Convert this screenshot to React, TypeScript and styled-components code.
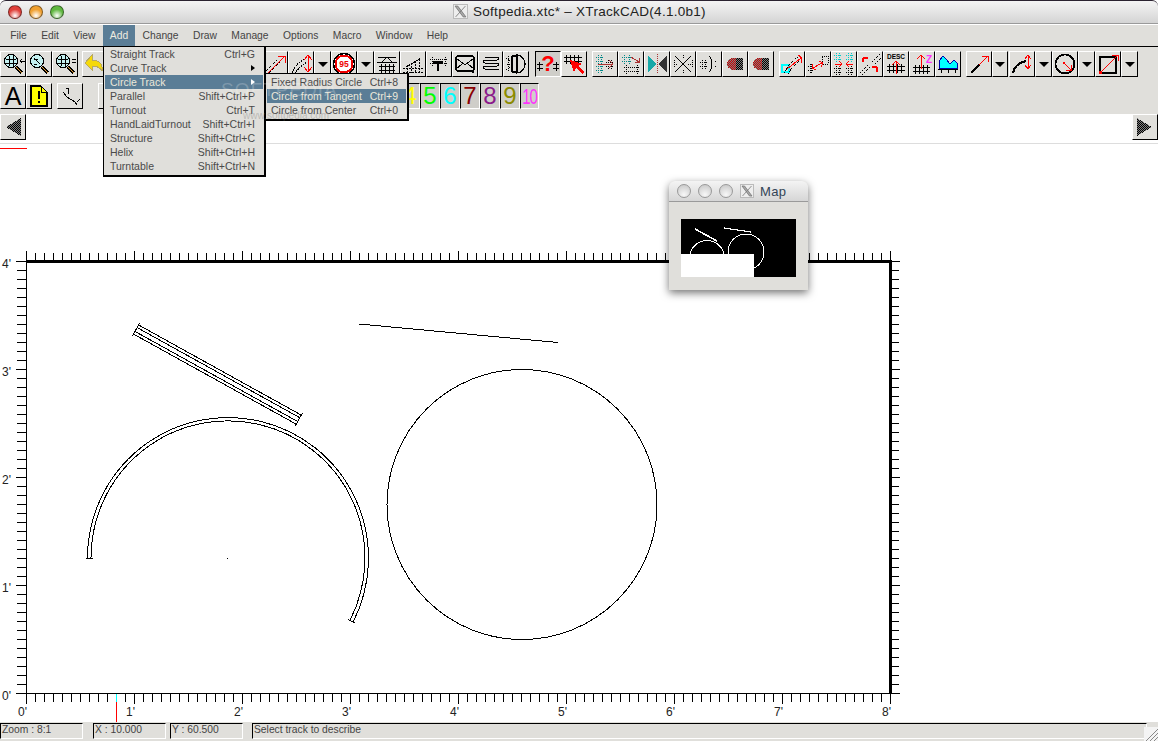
import React, { ReactNode } from "react";
import styled, { createGlobalStyle } from "styled-components";

const GREY = "#e0dfdb";
const HILITE = "#5a7d96";

const GlobalStyle = createGlobalStyle`
    html, body {
        margin: 0;
        padding: 0;
        background: white;
        overflow: hidden;
    }
    body {
        font-family: "Liberation Sans", Arial, sans-serif;
    }
`;

// small icon drawings, all on a 24x24 grid
const Rails = ({ x = 4, y = 10, w = 16, c = "#000" }: { x?: number, y?: number, w?: number, c?: string }) => {
    const ties = [];
    for (let i = x + 2; i < x + w; i += 4) ties.push(i);
    return (
        <g stroke={c}>
            <line x1={x} y1={y + 2.5} x2={x + w} y2={y + 2.5} />
            <line x1={x} y1={y + 6.5} x2={x + w} y2={y + 6.5} />
            {ties.map((t) => <line key={t} x1={t + 0.5} y1={y} x2={t + 0.5} y2={y + 9} />)}
        </g>
    );
};

const DotRails = ({ x = 4, y = 8, w = 12, c = "#000" }: { x?: number, y?: number, w?: number, c?: string }) => (
    <g stroke={c} strokeDasharray="1 1">
        <line x1={x} y1={y + 2.5} x2={x + w} y2={y + 2.5} />
        <line x1={x} y1={y + 6.5} x2={x + w} y2={y + 6.5} />
        <line x1={x + 2.5} y1={y} x2={x + 2.5} y2={y + 9} />
        <line x1={x + w - 2.5} y1={y} x2={x + w - 2.5} y2={y + 9} />
    </g>
);

const Arrow = ({ d, tip, c = "#f00" }: { d: string, tip: string, c?: string }) => (
    <g fill="none" stroke={c} strokeWidth="1">
        <path d={d} />
        <path d={tip} />
    </g>
);

const Mag = ({ children }: { children?: ReactNode }) => (
    <>
        <line x1="15" y1="15" x2="21" y2="21" stroke="#000" strokeWidth="3" />
        <line x1="15.5" y1="15.5" x2="21" y2="21" stroke="#e8a13a" strokeWidth="1.4" />
        <circle cx="10" cy="9" r="6.5" fill="#c4f0f0" stroke="#000" strokeWidth="1.3" />
        {children}
    </>
);

const Diag = ({ c = "#000" }: { c?: string }) => (
    <g stroke={c} strokeWidth="1" strokeDasharray="1 1" fill="none">
        <line x1="3" y1="19" x2="14" y2="8" />
        <line x1="6" y1="21" x2="17" y2="10" />
    </g>
);

const Dither = ({ id, c = "#000" }: { id: string, c?: string }) => (
    <pattern id={id} width="2" height="2" patternUnits="userSpaceOnUse">
        <rect width="2" height="2" fill="#808080" />
        <rect width="1" height="1" fill={c} />
        <rect x="1" y="1" width="1" height="1" fill={c} />
    </pattern>
);

const Blob = ({ id }: { id: string }) => (
    <>
        <defs>
            <Dither id={id} />
            <Dither id={id + "r"} c="#c00" />
        </defs>
        <path d="M4 12a7 6 0 0 1 7-6h9v12h-9a7 6 0 0 1-7-6z" fill={`url(#${id})`} />
        <path d="M4 12a7 6 0 0 1 7-6h2v12h-2a7 6 0 0 1-7-6z" fill={`url(#${id}r)`} />
    </>
);

const ICONS: { [key: string]: ReactNode } = {
    zoomIn: <Mag><path d="M5 7h10M5 11h10M8 4v10M12 4v10" stroke="#000" /><path d="M24 9h-5M21 7l-2 2 2 2" stroke="#000" fill="none" /></Mag>,
    zoomSet: <Mag><path d="M7 6l6 6M7 12h3M7 7h4" stroke="#000" fill="none" /></Mag>,
    zoomOut: <Mag><path d="M5 7h10M5 11h10M8 4v10M12 4v10" stroke="#000" /><path d="M19 7h4M19 10h4" stroke="#000" /></Mag>,
    undo: <path d="M9 3L2 11l7 7v-4c5 0 8 1 10 5 1-7-3-11-10-11z" fill="#f5d90a" stroke="#b8a860" />,
    redo: <path d="M15 3l7 8-7 7v-4c-5 0-8 1-10 5-1-7 3-11 10-11z" fill="#ddd" stroke="#aaa" />,
    straightArrow: (
        <>
            <Diag />
            <Arrow d="M4 22L21 5" tip="M15 4h7v7" />
        </>
    ),
    curveArrow: (
        <>
            <path d="M3 21C6 14 10 10 16 7M6 22C9 16 13 13 18 10" stroke="#000" strokeWidth="1.2" strokeDasharray="1.5 1" fill="none" />
            <Arrow d="M19 4v15" tip="M15 8l4-5 4 5M15 15l4 5 4-5" />
        </>
    ),
    speed: (
        <>
            <circle cx="12" cy="12" r="10.5" fill="#fff" stroke="#000" strokeWidth="1.5" />
            <circle cx="12" cy="12" r="8.5" fill="#fff" stroke="#e00" strokeWidth="2" />
            <SvgLabel x={12} y={15} size={8.5} color="#e00" bold>95</SvgLabel>
        </>
    ),
    bridge: (
        <>
            <path d="M3 5.5h18M6 11l6-6 6 6M2 10.5h20" stroke="#000" fill="none" />
            <Rails x={4} y={12} w={16} />
        </>
    ),
    ramp: (
        <path d="M2 17L20 6M2 20h20M6 13v8M10 11v10M14 9v12M18 7v14M2 16h20" stroke="#000" strokeDasharray="2 1" fill="none" />
    ),
    tee: (
        <>
            <path d="M6 9h10v3H6zM10 12h2v7h-2z" fill="#000" />
            <DotRails x={3} y={5} w={18} />
        </>
    ),
    tray: (
        <>
            <rect x="3" y="4" width="18" height="15" rx="2" fill="none" stroke="#000" strokeWidth="1.4" />
            <path d="M3 6l9 7 9-7M3 17l6-5M21 17l-6-5" stroke="#000" fill="none" />
            <rect x="19" y="19" width="2" height="2" fill="#000" />
        </>
    ),
    coil: <path d="M6 5h13c2 2 0 3-1 3H6c-2 0-2 3 0 3h12c2 0 2 3 0 3H6c-2 0-2 3 0 3h14" stroke="#000" fill="none" />,
    table: (
        <>
            <path d="M13 3a8 9 0 0 1 0 18zM8 4h5M8 20h5M8 4v16" stroke="#000" fill="none" strokeWidth="1.2" />
            <path d="M2 6l5 3M2 18l5-3M3 12h4M4 4v16" stroke="#000" strokeDasharray="1 1" fill="none" />
        </>
    ),
    help: (
        <>
            <path d="M1 12.5h6M1 16.5h6M17 12.5h6M17 16.5h6M3.5 10v9M20.5 10v9" stroke="#000" fill="none" />
            <SvgLabel x={12} y={19} size={22} color="#f00" bold>?</SvgLabel>
        </>
    ),
    pick: (
        <>
            <Rails x={2} y={3} w={18} />
            <path d="M8 8l12 4-4 2 6 6-2 2-6-6-2 4z" fill="#f00" />
        </>
    ),
    splitTeal: (
        <>
            <DotRails x={3} y={3} w={8} c="#088" />
            <DotRails x={3} y={12} w={8} c="#088" />
            <DotRails x={13} y={8} w={8} />
            <Arrow d="M5 12h15" tip="M16 8l4 4-4 4" c="#a33" />
        </>
    ),
    splitRamp: (
        <>
            <DotRails x={3} y={3} w={10} c="#088" />
            <DotRails x={5} y={13} w={16} />
            <Arrow d="M12 5l8 5" tip="M16 10h4v-4" c="#a33" />
        </>
    ),
    bow: (
        <>
            <path d="M3 4v16L12 12zM13 12l9-8v16z" fill="#333" />
            <path d="M3 4v16L12 12z" fill="#18a8a8" />
            <path d="M12 2v20" stroke="#a33" strokeDasharray="1 1" />
        </>
    ),
    cross: (
        <>
            <path d="M4 4l16 16M4 20L20 4" stroke="#000" fill="none" />
            <path d="M3 12h4M17 12h4M3 8v8M21 8v8M12 3v3M12 18v3" stroke="#000" strokeDasharray="1 1" fill="none" />
        </>
    ),
    bracket: (
        <>
            <DotRails x={3} y={8} w={8} />
            <path d="M12 4c4 4 4 12 0 16" stroke="#000" fill="none" />
            <path d="M18 9v1M18 14v1" stroke="#000" />
        </>
    ),
    blob: <Blob id="blobA" />,
    blobB: <Blob id="blobB" />,
    cyanCurve: (
        <>
            <rect x="2" y="13" width="7" height="7" fill="none" stroke="#0ff" strokeWidth="1.5" />
            <path d="M4 21C8 14 12 9 18 5M8 22C12 16 15 12 20 9" stroke="#000" strokeDasharray="1 1" fill="none" />
            <Arrow d="M7 17L21 6" tip="M18 3l4 3-1 5" />
        </>
    ),
    pull: (
        <>
            <DotRails x={2} y={12} w={6} />
            <path d="M16 4h6v8h-6z" stroke="#000" strokeDasharray="1 1" fill="none" />
            <Arrow d="M7 16L16 11" tip="M13 9l4 2-2 4M7 12l-1 4 4 2" />
        </>
    ),
    join: (
        <>
            <DotRails x={2} y={1} w={8} c="#0cc" />
            <DotRails x={14} y={1} w={8} c="#0cc" />
            <DotRails x={2} y={14} w={8} />
            <DotRails x={14} y={14} w={8} />
            <Arrow d="M3 12h7M21 12h-7" tip="M7 9l3 3-3 3M17 9l-3 3 3 3" />
        </>
    ),
    trim: (
        <>
            <path d="M14 10l8-8M17 12l6-6M2 21l8-8M4 23l8-8" stroke="#000" strokeWidth="1.3" strokeDasharray="1.5 1" fill="none" />
            <path d="M5 6v4M5 6H10M19 15v5M19 15h-5" stroke="#f00" strokeWidth="1.4" fill="none" />
        </>
    ),
    desc: (
        <>
            <SvgLabel x={12} y={7} size={6.5} color="#000" bold>DESC</SvgLabel>
            <Rails x={3} y={12} w={18} />
            <Arrow d="M12 22V9" tip="M8 13l4-4 4 4" />
        </>
    ),
    elev: (
        <>
            <Rails x={3} y={13} w={17} />
            <Arrow d="M11 17V3" tip="M7 7l4-4 4 4" />
            <SvgLabel x={19} y={11} size={10} color="#f3f" bold>Z</SvgLabel>
        </>
    ),
    profile: (
        <>
            <path d="M3 16V9l4-5 4 4 3 4 4-4 3 3v5z" fill="#0ff" stroke="#00a" />
            <path d="M2 17h20M5 17v4M12 17v4M19 17v4" stroke="#000" fill="none" />
        </>
    ),
    line: (
        <>
            <path d="M4 21l8-8" stroke="#000" strokeWidth="2.5" />
            <Arrow d="M12 13l9-9" tip="M15 4h6v6" />
        </>
    ),
    arc: (
        <>
            <path d="M3 21c1-6 5-10 13-12" stroke="#000" strokeWidth="2" fill="none" />
            <Arrow d="M18 3v14" tip="M15 7l3-4 3 4M15 13l3 4 3-4" />
        </>
    ),
    circle: (
        <>
            <circle cx="12" cy="12" r="9.5" fill="none" stroke="#000" strokeWidth="1.8" />
            <rect x="10" y="10" width="2" height="2" fill="#f00" />
            <Arrow d="M12 12l6 6" tip="M18 13v5h-5" />
        </>
    ),
    box: (
        <>
            <rect x="4" y="5" width="16" height="16" fill="none" stroke="#000" strokeWidth="2.4" />
            <rect x="3" y="19" width="3" height="3" fill="#f00" />
            <Arrow d="M4 21L22 3" tip="M16 3h6v6" />
        </>
    ),
    note: (
        <>
            <path d="M4 2h10l6 6v14H4z" fill="#ff0" stroke="#000" strokeWidth="1.3" />
            <path d="M14 2v6h6" fill="none" stroke="#000" />
            <path d="M12 7v8M12 17v2" stroke="#000" strokeWidth="1.5" />
        </>
    ),
    ruler: <path d="M5 8l4 5 8 5 2 3M19 18l3-3M10 4v6M8.5 5l1.5-1" stroke="#000" fill="none" />,
};

function SvgLabel(props: { x: number, y: number, size: number, color: string, bold?: boolean, children: ReactNode }) {
    return (
        <text
            x={props.x}
            y={props.y}
            textAnchor="middle"
            fontSize={props.size}
            fill={props.color}
            fontWeight={props.bold ? 700 : 400}
            fontFamily="'Liberation Sans', sans-serif"
        >
            {props.children}
        </text>
    );
}

type Tool = { icon?: string, w?: number, kind?: "drop", pressed?: boolean, gap?: number };

const ROW_ONE: Tool[] = [
    { icon: "zoomIn" }, { icon: "zoomSet" }, { icon: "zoomOut" },
    { icon: "undo", gap: 4 }, { icon: "redo" }, {}, {}, {}, {}, { w: 24 },
    { icon: "straightArrow" }, { icon: "curveArrow" }, { kind: "drop", w: 17 },
    { icon: "speed" }, { kind: "drop", w: 17 },
    { icon: "bridge" }, { icon: "ramp" }, { icon: "tee" }, { icon: "tray" }, { icon: "coil", w: 25 }, { icon: "table" },
    { icon: "help", gap: 6, pressed: true }, { icon: "pick" },
    { icon: "splitTeal", gap: 5 }, { icon: "splitRamp" }, { icon: "bow" }, { icon: "cross" }, { icon: "bracket" }, { icon: "blob" }, { icon: "blobB" },
    { icon: "cyanCurve", gap: 5 }, { icon: "pull" }, { icon: "join" }, { icon: "trim" }, { icon: "desc" }, { icon: "elev" }, { icon: "profile" },
    { icon: "line", gap: 5 }, { kind: "drop", w: 16 },
    { icon: "arc", gap: 1 }, { kind: "drop", w: 17 },
    { icon: "circle" }, { kind: "drop", w: 17 },
    { icon: "box" }, { kind: "drop", w: 17 },
];

const LAYERS = [
    { n: "1", c: "#000" }, { n: "2", c: "#00f" }, { n: "3", c: "#f00" }, { n: "4", c: "#ff0" },
    { n: "5", c: "#0f0" }, { n: "6", c: "#0ff" }, { n: "7", c: "#8b0000" }, { n: "8", c: "#8b1a8b" },
    { n: "9", c: "#8b8b00" }, { n: "10", c: "#f3f" },
];

const MENUS = ["File", "Edit", "View", "Add", "Change", "Draw", "Manage", "Options", "Macro", "Window", "Help"];

const ADD_ITEMS = [
    { label: "Straight Track", key: "Ctrl+G" },
    { label: "Curve Track", more: true },
    { label: "Circle Track", more: true, active: true },
    { label: "Parallel", key: "Shift+Ctrl+P" },
    { label: "Turnout", key: "Ctrl+T" },
    { label: "HandLaidTurnout", key: "Shift+Ctrl+I" },
    { label: "Structure", key: "Shift+Ctrl+C" },
    { label: "Helix", key: "Shift+Ctrl+H" },
    { label: "Turntable", key: "Shift+Ctrl+N" },
];

const CIRCLE_ITEMS = [
    { label: "Fixed Radius Circle", key: "Ctrl+8" },
    { label: "Circle from Tangent", key: "Ctrl+9", active: true },
    { label: "Circle from Center", key: "Ctrl+0" },
];

const STATUS = [
    { text: "Zoom : 8:1", w: 83, gap: 0 },
    { text: "X : 10.000", w: 73, gap: 10 },
    { text: "Y : 60.500", w: 73, gap: 4 },
    { text: "Select track to describe", w: 895, gap: 9 },
];

const Range = (n: number) => Array.from({ length: n }, (_, i) => i);

const Ruler = () => (
    <g stroke="#000" shapeRendering="crispEdges">
        {Range(97).map((i) => {
            const x = 26.5 + i * 9;
            const foot = i % 12 === 0;
            return (
                <g key={i}>
                    <line x1={x} y1={foot ? 251 : 253} x2={x} y2={261} />
                    <line x1={x} y1={693} x2={x} y2={foot ? 704 : 702} />
                </g>
            );
        })}
        {Range(49).map((i) => {
            const y = 261.5 + i * 9;
            const foot = i % 12 === 0;
            return (
                <g key={i}>
                    <line x1={foot ? 16 : 17} y1={y} x2={26} y2={y} />
                    <line x1={891} y1={y} x2={foot ? 900 : 899} y2={y} />
                </g>
            );
        })}
        <line x1="26.5" y1="251" x2="26.5" y2="704" />
        <line x1="17" y1="693.5" x2="900" y2="693.5" />
        <rect x="26" y="260" width="866" height="3" fill="#000" stroke="none" />
        <rect x="889" y="260" width="3" height="434" fill="#000" stroke="none" />
        <line x1="116.5" y1="694" x2="116.5" y2="702" stroke="#0ff" />
        <line x1="116.5" y1="702" x2="116.5" y2="722" stroke="#f00" />
        <line x1="0" y1="148.5" x2="27" y2="148.5" stroke="#f00" />
    </g>
);

const RulerLabels = () => (
    <g fontSize="12" fill="#222" fontFamily="'Liberation Sans', sans-serif">
        {Range(9).map((i) => (
            <text key={i} x={27 + i * 108} y={716} textAnchor="end">{i}'</text>
        ))}
        {Range(5).map((i) => (
            <text key={i} x={2} y={700 - i * 108}>{i}'</text>
        ))}
    </g>
);

const Layout = () => {
    // straight track: two pairs of rails with a tie at each end
    const offsets = [-5.2, -2.2, 2.2, 5.2];
    return (
        <g fill="none" stroke="#000" strokeWidth="1" shapeRendering="crispEdges">
            <g transform="translate(136 329.5) rotate(28.98)">
                {offsets.map((o) => <line key={o} x1={0} y1={o} x2={186} y2={o} />)}
                <line x1={0} y1={-7.5} x2={0} y2={7.5} />
                <line x1={186} y1={-7.5} x2={186} y2={7.5} />
            </g>
            <path d="M87.5 558A140.5 140.5 0 1 1 353.3 621.6" />
            <path d="M91 558A137 137 0 1 1 350.1 620" />
            <line x1="85.5" y1="558.5" x2="92.5" y2="558.5" />
            <line x1="348" y1="619.5" x2="355" y2="623" />
            <rect x="227" y="558" width="1" height="1" fill="#000" stroke="none" />
            <circle cx="522" cy="504.5" r="135" />
            <line x1="359" y1="324" x2="558" y2="342.5" />
        </g>
    );
};

const MapDrawing = () => (
    <MapSvg viewBox="0 0 115 58" shapeRendering="crispEdges">
        <rect width="115" height="58" fill="#000" />
        <line x1="14" y1="10" x2="36" y2="22" stroke="#fff" strokeWidth="1.6" />
        <line x1="43" y1="9" x2="70" y2="13" stroke="#fff" strokeWidth="1.2" />
        <circle cx="26" cy="39" r="17.5" fill="none" stroke="#fff" />
        <circle cx="65" cy="33" r="18" fill="none" stroke="#fff" />
        <rect y="35" width="73" height="23" fill="#fff" />
    </MapSvg>
);

const XMark = ({ size }: { size: number }) => (
    <XBox $size={size}>
        <svg width={size - 2} height={size - 2} viewBox="0 0 12 12">
            <path d="M1 1h2.5l7.5 10H8.5zM10.5 1L1.5 11" stroke="#777" strokeWidth="0.8" fill="#aaa" />
        </svg>
    </XBox>
);

const ToolButton = ({ tool }: { tool: Tool }) => (
    <Btn $w={tool.w ?? 26} $gap={tool.gap ?? 0} $pressed={tool.pressed}>
        {tool.kind === "drop" ? <DropMark /> : (
            tool.icon && <IconSvg viewBox="0 0 24 24" shapeRendering="crispEdges">{ICONS[tool.icon]}</IconSvg>
        )}
    </Btn>
);

const App = () => (
    <Page>
        <GlobalStyle />
        <TitleBar>
            <Lights>
                <Light $c="#e0403a" />
                <Light $c="#f0a030" />
                <Light $c="#60b840" />
            </Lights>
            <XMark size={15} />
            <TitleText>Softpedia.xtc* – XTrackCAD(4.1.0b1)</TitleText>
        </TitleBar>

        <MenuBar>
            {MENUS.map((m) => <MenuItem key={m} $open={m === "Add"}>{m}</MenuItem>)}
        </MenuBar>

        <ToolArea>
            <ToolRow>
                {ROW_ONE.map((t, i) => <ToolButton key={i} tool={t} />)}
            </ToolRow>
            <ToolRow>
                <Btn $w={26}><BigA>A</BigA></Btn>
                <Btn $w={26}><IconSvg viewBox="0 0 24 24" shapeRendering="crispEdges">{ICONS.note}</IconSvg></Btn>
                <Btn $w={26} $gap={5}><IconSvg viewBox="0 0 24 24" shapeRendering="crispEdges">{ICONS.ruler}</IconSvg></Btn>
                <Btn $w={26} $gap={15} />
                <LayerButtons>
                    {LAYERS.map((l) => (
                        <LayerBtn key={l.n} $c={l.c} $narrow={l.n === "10"}>
                            {l.n === "10" ? <TallDigits>{l.n}</TallDigits> : l.n}
                        </LayerBtn>
                    ))}
                </LayerButtons>
            </ToolRow>
        </ToolArea>

        <ScrollRow>
            <ArrowBtn>
                <svg width="22" height="22" viewBox="0 0 22 22" shapeRendering="crispEdges">
                    <defs><Dither id="ditherL" /></defs>
                    <path d="M19 2v18L4 11z" fill="url(#ditherL)" />
                </svg>
            </ArrowBtn>
            <ArrowBtn>
                <svg width="22" height="22" viewBox="0 0 22 22" shapeRendering="crispEdges">
                    <defs><Dither id="ditherR" /></defs>
                    <path d="M3 2v18l15-9z" fill="url(#ditherR)" />
                </svg>
            </ArrowBtn>
        </ScrollRow>

        <Canvas viewBox="0 144 1158 578">
            <Ruler />
            <RulerLabels />
            <Layout />
        </Canvas>

        <StatusBar>
            {STATUS.map((s) => <StatusField key={s.text} $w={s.w} $gap={s.gap}>{s.text}</StatusField>)}
            <Grip>
                <svg width="14" height="14" viewBox="0 0 14 14">
                    <path d="M2 14L14 2M6 14l8-8M10 14l4-4" stroke="#888" fill="none" />
                </svg>
            </Grip>
        </StatusBar>

        <Menu>
            {ADD_ITEMS.map((it) => (
                <MenuRow key={it.label} $active={it.active}>
                    <span>{it.label}</span>
                    {it.more ? <MoreMark $active={it.active} /> : <span>{it.key}</span>}
                </MenuRow>
            ))}
        </Menu>

        <SubMenu>
            {CIRCLE_ITEMS.map((it) => (
                <SubRow key={it.label} $active={it.active}>
                    <span>{it.label}</span>
                    <span>{it.key}</span>
                </SubRow>
            ))}
        </SubMenu>

        <Watermark>SOFTPEDIA</Watermark>
        <WatermarkUrl>www.softpedia.com</WatermarkUrl>

        <MapWindow>
            <MapTitle>
                <MapDot />
                <MapDot />
                <MapDot />
                <XMark size={14} />
                <MapName>Map</MapName>
            </MapTitle>
            <MapBody>
                <MapDrawing />
            </MapBody>
        </MapWindow>
    </Page>
);

const Page = styled.div`
    position: relative;
    display: flex;
    flex-direction: column;
    width: 1158px;
    height: 741px;
    overflow: hidden;
    background: white;
`;

const TitleBar = styled.div`
    display: flex;
    align-items: center;
    justify-content: flex-start;
    height: 22px;
    padding-left: 453px;
    border-top: 1px solid #2a2230;
    border-bottom: 1px solid #9a9a9a;
    border-radius: 6px 6px 0 0;
    background: linear-gradient(#f4f4f4, #d4d4d4);
`;

const Lights = styled.div`
    position: absolute;
    left: 8px;
    top: 5px;
    display: flex;
    gap: 7px;
`;

const Light = styled.div<{ $c: string }>`
    width: 14px;
    height: 14px;
    border-radius: 50%;
    border: 1px solid rgba(0, 0, 0, 0.45);
    box-sizing: border-box;
    background: radial-gradient(circle at 50% 80%, #fff 0, ${(p) => p.$c} 55%, ${(p) => p.$c} 100%);
`;

const XBox = styled.div<{ $size: number }>`
    display: flex;
    align-items: center;
    justify-content: center;
    width: ${(p) => p.$size}px;
    height: ${(p) => p.$size}px;
    box-sizing: border-box;
    border: 1px solid #bbb;
    background: #eee;
`;

const TitleText = styled.div`
    margin-left: 5px;
    font-size: 13.5px;
    letter-spacing: 0.28px;
    color: #222;
    white-space: nowrap;
`;

const MenuBar = styled.div`
    display: flex;
    align-items: center;
    height: 22px;
    padding-left: 3px;
    border-top: 1px solid #fff;
    border-bottom: 1px solid #000;
    background: ${GREY};
`;

const MenuItem = styled.div<{ $open?: boolean }>`
    display: flex;
    align-items: center;
    height: 100%;
    padding: 0 7.2px;
    font-size: 10.3px;
    color: ${(p) => (p.$open ? "#f0ece0" : "#444")};
    background: ${(p) => (p.$open ? HILITE : "transparent")};
`;

const ToolArea = styled.div`
    display: flex;
    flex-direction: column;
    gap: 6px;
    padding: 4px 0 5px;
    background: ${GREY};
`;

const ToolRow = styled.div`
    display: flex;
    height: 26px;
`;

const Btn = styled.div<{ $w: number, $gap?: number, $pressed?: boolean }>`
    display: flex;
    flex: none;
    align-items: center;
    justify-content: center;
    box-sizing: border-box;
    width: ${(p) => p.$w}px;
    height: 26px;
    margin-left: ${(p) => p.$gap ?? 0}px;
    border: 1px solid;
    border-color: ${(p) => (p.$pressed ? "#000 #fff #fff #000" : "#fff #000 #000 #fff")};
    background: ${(p) => (p.$pressed ? "#cfcec9" : GREY)};
    overflow: hidden;
`;

const IconSvg = styled.svg`
    display: block;
    flex: none;
    width: 24px;
    height: 24px;
`;

const DropMark = styled.div`
    width: 0;
    height: 0;
    border-left: 5px solid transparent;
    border-right: 5px solid transparent;
    border-top: 5px solid #000;
`;

const BigA = styled.span`
    font-size: 25px;
    line-height: 24px;
    color: #000;
`;

const LayerButtons = styled.div`
    display: flex;
    margin-left: 216px;
`;

const LayerBtn = styled.div<{ $c: string, $narrow?: boolean }>`
    display: flex;
    align-items: center;
    justify-content: center;
    box-sizing: border-box;
    width: ${(p) => (p.$narrow ? 19 : 20)}px;
    height: 26px;
    border: 1px solid;
    border-color: #000 #fff #fff #000;
    background: #cfcec9;
    color: ${(p) => p.$c};
    font-size: ${(p) => (p.$narrow ? 15 : 24)}px;
    overflow: hidden;
`;

const TallDigits = styled.span`
    display: block;
    letter-spacing: -1px;
    transform: scaleY(1.45);
`;

const ScrollRow = styled.div`
    display: flex;
    justify-content: space-between;
    align-items: flex-start;
    box-sizing: border-box;
    height: 31px;
    border-bottom: 1px solid #ddd;
`;

const ArrowBtn = styled.div`
    display: flex;
    align-items: center;
    justify-content: center;
    box-sizing: border-box;
    width: 26px;
    height: 26px;
    border: 1px solid;
    border-color: #fff #000 #000 #fff;
    background: ${GREY};
`;

const Canvas = styled.svg`
    display: block;
    flex: none;
    width: 1158px;
    height: 578px;
`;

const StatusBar = styled.div`
    position: relative;
    display: flex;
    box-sizing: border-box;
    height: 19px;
    padding-top: 1px;
    background: ${GREY};
`;

const StatusField = styled.div<{ $w: number, $gap: number }>`
    box-sizing: border-box;
    width: ${(p) => p.$w}px;
    height: 16px;
    margin-left: ${(p) => p.$gap}px;
    padding: 0 0 0 1px;
    border: 1px solid;
    border-color: #000 #fff #fff #000;
    font-size: 10.3px;
    line-height: 11px;
    color: #444;
    white-space: nowrap;
`;

const Grip = styled.div`
    position: absolute;
    right: 0;
    bottom: 0;
    width: 14px;
    height: 14px;
    background: #f4f4f4;
`;

const Menu = styled.div`
    position: absolute;
    left: 103px;
    top: 46px;
    box-sizing: border-box;
    width: 163px;
    height: 131px;
    padding: 0 1px;
    border: 1px solid #000;
    border-right-width: 2px;
    border-bottom-width: 2px;
    background: ${GREY};
`;

const MenuRow = styled.div<{ $active?: boolean }>`
    display: flex;
    align-items: center;
    justify-content: space-between;
    height: 14px;
    padding: 0 8px 0 5px;
    font-size: 10.5px;
    color: ${(p) => (p.$active ? "#ece8da" : "#4a4a4a")};
    background: ${(p) => (p.$active ? HILITE : "transparent")};
    white-space: nowrap;
`;

const MoreMark = styled.div<{ $active?: boolean }>`
    width: 0;
    height: 0;
    border-top: 3.5px solid transparent;
    border-bottom: 3.5px solid transparent;
    border-left: 4px solid ${(p) => (p.$active ? "#fff" : "#000")};
`;

const SubMenu = styled.div`
    position: absolute;
    left: 265px;
    top: 73px;
    box-sizing: border-box;
    width: 144px;
    height: 48px;
    padding: 1px 1px 0;
    border: 1px solid #000;
    border-right-width: 2px;
    border-bottom-width: 2px;
    background: ${GREY};
`;

const SubRow = styled(MenuRow)`
    padding: 0 8px 0 4px;
`;

const Watermark = styled.div`
    position: absolute;
    left: 221px;
    top: 79px;
    font-size: 19px;
    letter-spacing: 1px;
    color: rgba(255, 255, 255, 0.22);
    pointer-events: none;
`;

const WatermarkUrl = styled.div`
    position: absolute;
    left: 243px;
    top: 110px;
    font-size: 10px;
    color: rgba(110, 110, 110, 0.35);
    pointer-events: none;
`;

const MapWindow = styled.div`
    position: absolute;
    left: 669px;
    top: 181px;
    width: 139px;
    height: 109px;
    border-radius: 6px 6px 0 0;
    background: ${GREY};
    box-shadow: 0 3px 8px rgba(0, 0, 0, 0.55);
`;

const MapTitle = styled.div`
    display: flex;
    align-items: center;
    gap: 7px;
    box-sizing: border-box;
    height: 21px;
    padding-left: 8px;
    border-bottom: 1px solid #9a9a9a;
    border-radius: 6px 6px 0 0;
    background: linear-gradient(#f4f4f4, #d6d6d6);
`;

const MapDot = styled.div`
    box-sizing: border-box;
    width: 14px;
    height: 14px;
    border-radius: 50%;
    border: 1px solid #999;
    background: radial-gradient(circle at 50% 80%, #f8f8f8, #c4c4c4);
`;

const MapName = styled.span`
    margin-left: -1px;
    padding-top: 1px;
    font-size: 13px;
    letter-spacing: 0.4px;
    color: #345;
`;

const MapBody = styled.div`
    padding: 17px 12px 0;
`;

const MapSvg = styled.svg`
    display: block;
    width: 115px;
    height: 58px;
`;

export default App;
